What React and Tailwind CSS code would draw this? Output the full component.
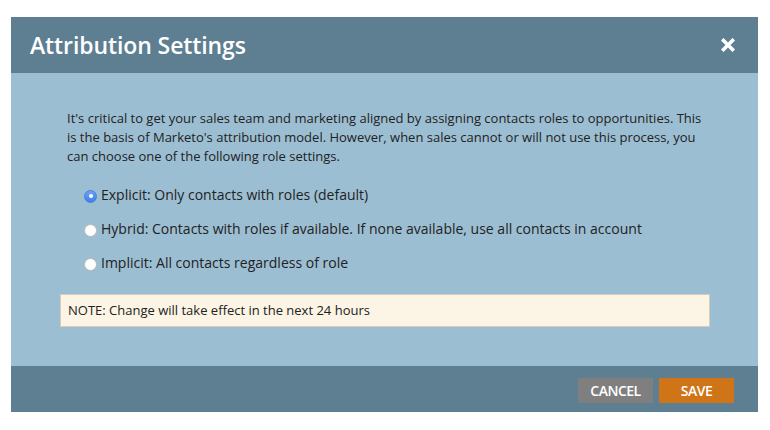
import React from "react";

function Radio({ checked }) {
  return checked ? (
    <span className="w-[13px] h-[13px] rounded-full bg-gradient-to-b from-[#6aa4f7] to-[#3f7fe8] border border-[#4a7fd6] flex items-center justify-center shrink-0 mt-[2px]">
      <span className="w-[4px] h-[4px] rounded-full bg-white" />
    </span>
  ) : (
    <span className="w-[13px] h-[13px] rounded-full bg-white border border-[#b8b8b8] shrink-0 mt-[2px]" />
  );
}

export default function App() {
  const options = [
    { label: "Explicit: Only contacts with roles (default)", checked: true },
    { label: "Hybrid: Contacts with roles if available. If none available, use all contacts in account", checked: false },
    { label: "Implicit: All contacts regardless of role", checked: false },
  ];
  return (
    <div className="w-[770px] h-[430px] bg-white pt-[17px] pl-[11px]" style={{ fontFamily: '"Open Sans", sans-serif' }}>
      <div className="w-[747px] flex flex-col">
        <div className="h-[56px] bg-[#5e7f92] flex items-center justify-between pl-[19px] pr-[23px]">
          <span className="text-white text-[23px] font-semibold leading-none tracking-[-0.1px]">Attribution Settings</span>
          <svg width="14" height="14" viewBox="0 0 14 14">
            <path d="M2.5 2.5 L11.5 11.5 M11.5 2.5 L2.5 11.5" stroke="white" strokeWidth="3.6" strokeLinecap="square" />
          </svg>
        </div>
        <div className="h-[293px] bg-[#9cbed2] pt-[36px] pl-[49px] pr-[48px]">
          <p className="text-[13px] leading-[19px] text-[#222] pl-[7px] pr-[2px]">
            It's critical to get your sales team and marketing aligned by assigning contacts roles to opportunities. This is the basis of Marketo's attribution model. However, when sales cannot or will not use this process, you can choose one of the following role settings.
          </p>
          <div className="mt-[12px] pl-[24px] flex flex-col">
            {options.map((o, i) => (
              <div key={i} className="h-[34px] flex items-center gap-[4px]">
                <Radio checked={o.checked} />
                <span className="text-[14px] text-[#222] leading-none">{o.label}</span>
              </div>
            ))}
          </div>
          <div className="mt-[14px] h-[33px] bg-[#fcf4e4] border border-[#d9cdb9] flex items-center pl-[7px] text-[13px] text-[#222]">
            NOTE: Change will take effect in the next 24 hours
          </div>
        </div>
        <div className="h-[46px] bg-[#5e7f92] flex justify-end items-start pt-[12px] pr-[24px] gap-[6px]">
          <button className="w-[75px] h-[25px] bg-[#7f7f7f] text-white text-[14px] font-semibold tracking-[-0.5px] flex items-center justify-center">CANCEL</button>
          <button className="w-[75px] h-[25px] bg-[#d07418] text-white text-[14px] font-semibold tracking-[-0.5px] flex items-center justify-center">SAVE</button>
        </div>
      </div>
    </div>
  );
}
